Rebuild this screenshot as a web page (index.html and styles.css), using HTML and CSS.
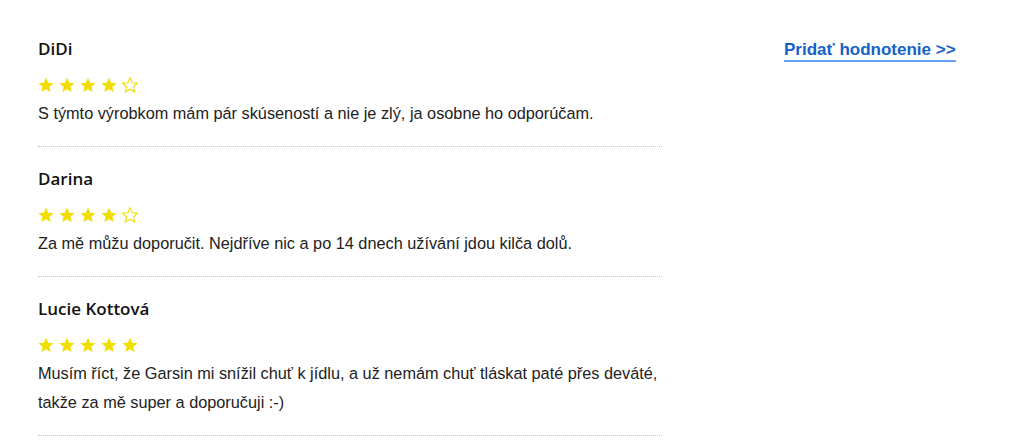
FILE: index.html
```html
<!DOCTYPE html>
<html lang="sk">
<head>
    <meta charset="UTF-8">
    <meta name="viewport" content="width=device-width, initial-scale=1.0">
    <title>Hodnotenia</title>
    <link rel="stylesheet" href="styles.css">
</head>
<body>
    <svg width="0" height="0" style="position:absolute">
        <defs>
            <polygon id="star-shape" points="8,0.6 10.12,5.69 15.61,6.13 11.42,9.71 12.7,15.07 8,12.2 3.3,15.07 4.58,9.71 0.39,6.13 5.88,5.69"/>
        </defs>
    </svg>

    <div class="page">
        <div class="reviews">
            <div class="review">
                <div class="name">DiDi</div>
                <div class="stars">
                    <svg class="star full" viewBox="0 0 16 16"><use href="#star-shape"/></svg>
                    <svg class="star full" viewBox="0 0 16 16"><use href="#star-shape"/></svg>
                    <svg class="star full" viewBox="0 0 16 16"><use href="#star-shape"/></svg>
                    <svg class="star full" viewBox="0 0 16 16"><use href="#star-shape"/></svg>
                    <svg class="star empty" viewBox="0 0 16 16"><use href="#star-shape"/></svg>
                </div>
                <p class="text">S týmto výrobkom mám pár skúseností a nie je zlý, ja osobne ho odporúčam.</p>
            </div>

            <div class="review">
                <div class="name">Darina</div>
                <div class="stars">
                    <svg class="star full" viewBox="0 0 16 16"><use href="#star-shape"/></svg>
                    <svg class="star full" viewBox="0 0 16 16"><use href="#star-shape"/></svg>
                    <svg class="star full" viewBox="0 0 16 16"><use href="#star-shape"/></svg>
                    <svg class="star full" viewBox="0 0 16 16"><use href="#star-shape"/></svg>
                    <svg class="star empty" viewBox="0 0 16 16"><use href="#star-shape"/></svg>
                </div>
                <p class="text">Za mě můžu doporučit. Nejdříve nic a po 14 dnech užívání jdou kilča dolů.</p>
            </div>

            <div class="review">
                <div class="name">Lucie Kottová</div>
                <div class="stars">
                    <svg class="star full" viewBox="0 0 16 16"><use href="#star-shape"/></svg>
                    <svg class="star full" viewBox="0 0 16 16"><use href="#star-shape"/></svg>
                    <svg class="star full" viewBox="0 0 16 16"><use href="#star-shape"/></svg>
                    <svg class="star full" viewBox="0 0 16 16"><use href="#star-shape"/></svg>
                    <svg class="star full" viewBox="0 0 16 16"><use href="#star-shape"/></svg>
                </div>
                <p class="text">Musím říct, že Garsin mi snížil chuť k jídlu, a už nemám chuť tláskat paté přes deváté, takže za mě super a doporučuji :-)</p>
            </div>
        </div>

        <div class="side">
            <a href="#" class="add-review">Pridať hodnotenie &gt;&gt;</a>
        </div>
    </div>
</body>
</html>
```

FILE: styles.css
```css
body {
    margin: 0;
    background: #ffffff;
    font-family: 'Liberation Sans', Arial, sans-serif;
    color: #222222;
}
.page {
    display: flex;
    gap: 122px;
    padding: 17px 0 0 38px;
}
.reviews {
    width: 624px;
}
.review {
    padding: 20px 0 18px;
    border-bottom: 1px dotted #c4c4c4;
}
.name {
    font-family: 'Open Sans', sans-serif;
    font-weight: 600;
    font-size: 17px;
    line-height: 24px;
    color: #111111;
}
.stars {
    display: flex;
    gap: 5px;
    margin-top: 16px;
    height: 16px;
}
.star {
    width: 16px;
    height: 16px;
}
.star.full {
    fill: #f0de00;
}
.star.empty {
    fill: none;
    stroke: #f0de00;
    stroke-width: 1.1;
}
.text {
    margin: 6px 0 0;
    font-size: 16.3px;
    line-height: 29px;
}
.side {
    padding-top: 23px;
}
.add-review {
    display: inline-block;
    font-weight: bold;
    font-size: 17px;
    line-height: 19px;
    padding-bottom: 1px;
    color: #1462c9;
    text-decoration: none;
    border-bottom: 2px solid #62a2ee;
}
```
